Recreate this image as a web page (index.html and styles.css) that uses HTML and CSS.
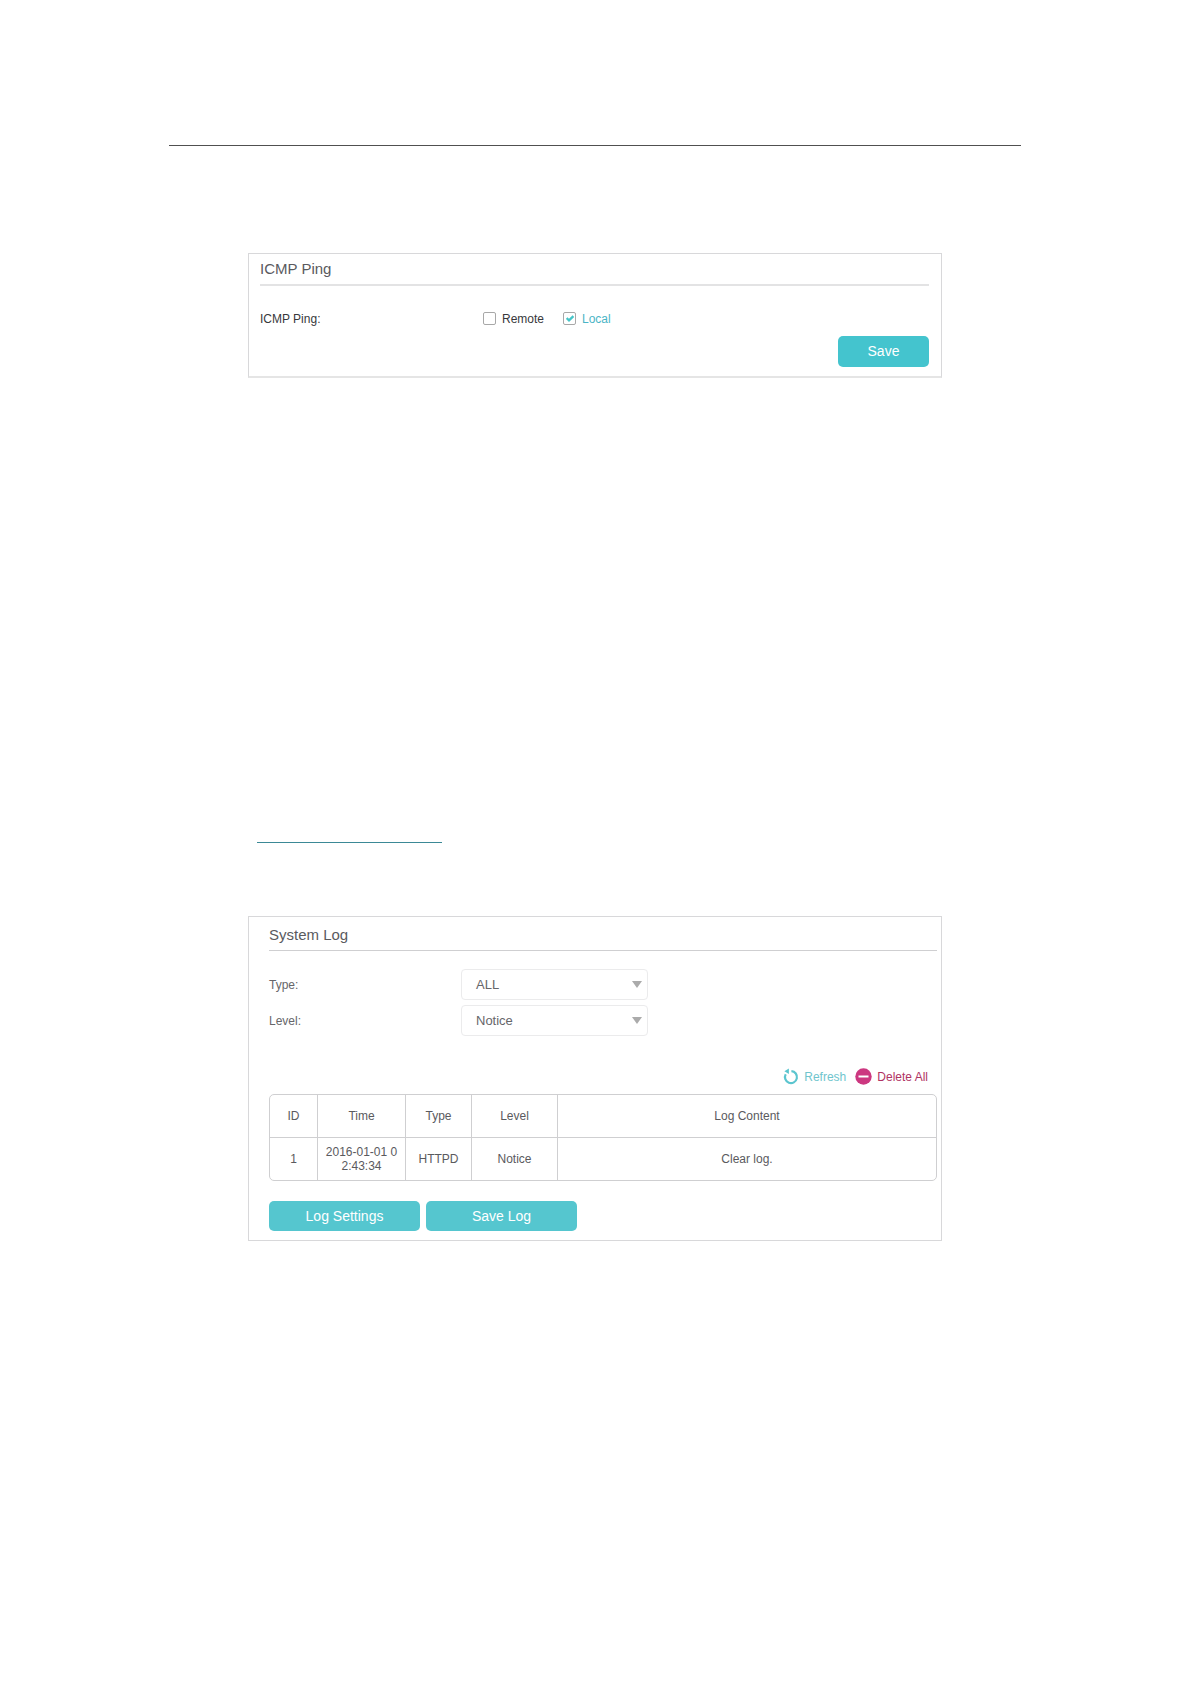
FILE: index.html
```html
<!DOCTYPE html>
<html lang="en">
<head>
<meta charset="utf-8">
<title>System Log</title>
<link rel="stylesheet" href="styles.css">
</head>
<body>
<hr class="page-rule">
<section class="panel ping">
  <h2 class="title">ICMP Ping</h2>
  <div class="ping-row">
    <span class="label">ICMP Ping:</span>
    <span class="check"><span class="box"></span>Remote</span>
    <span class="check on"><span class="box"><svg width="8" height="7" viewBox="0 0 8 7"><path d="M0.6 3L3 5.3L7.4 1.2" fill="none" stroke="#45c5c8" stroke-width="2.3"/></svg></span>Local</span>
  </div>
  <button class="btn save">Save</button>
</section>
<hr class="link-rule">
<section class="panel log">
  <h2 class="title">System Log</h2>
  <div class="field"><span class="label">Type:</span><span class="select">ALL<i class="arrow"></i></span></div>
  <div class="field"><span class="label">Level:</span><span class="select">Notice<i class="arrow"></i></span></div>
  <div class="actions">
    <span class="action refresh"><svg width="16" height="17" viewBox="0 0 16 17"><path d="M8.4 3.1A6 6 0 1 1 2.7 6.2" fill="none" stroke="#5bc5cf" stroke-width="2.2"/><path d="M1.4 3.3L5.9 0.4V6Z" fill="#5bc5cf"/></svg>Refresh</span>
    <span class="action delete"><svg width="17" height="17" viewBox="0 0 17 17"><circle cx="8.5" cy="8.5" r="8.2" fill="#cc3780"/><path d="M3.5 8.5H13.5" stroke="#fff" stroke-width="2"/></svg>Delete All</span>
  </div>
  <div class="table">
    <span>ID</span><span>Time</span><span>Type</span><span>Level</span><span>Log Content</span>
    <span>1</span><span>2016-01-01 0<br>2:43:34</span><span>HTTPD</span><span>Notice</span><span>Clear log.</span>
  </div>
  <div class="buttons"><button class="btn">Log Settings</button><button class="btn">Save Log</button></div>
</section>
</body>
</html>
```
FILE: styles.css
```css
* { box-sizing: border-box; }
body {
  margin: 0;
  height: 1684px;
  padding-top: 145px;
  background: #fff;
  color: #5a5a5e;
  font: 12px/14px "Liberation Sans", Arial, sans-serif;
}
.page-rule { width: 852px; height: 1px; margin: 0 0 0 169px; border: 0; background: #505050; }
.link-rule { width: 185px; height: 1px; margin: 464px 0 0 257px; border: 0; background: #3b8996; }
.panel { width: 694px; margin-left: 248px; border: 1px solid #d8d8da; }
.title { margin: 0; font-size: 15px; font-weight: 400; line-height: 18px; }
.btn {
  display: block;
  height: 30px;
  padding: 0;
  border: 0;
  border-radius: 5px;
  background: #55c6cf;
  color: #fff;
  font: 14px/30px "Liberation Sans", Arial, sans-serif;
}

.ping { height: 125px; margin-top: 107px; padding: 6px 12px 0 11px; border-bottom: 2px solid #e5e5e5; }
.ping .title { height: 26px; border-bottom: 2px solid #e3e3e4; }
.ping-row { display: flex; align-items: center; height: 14px; margin-top: 26px; color: #38383c; }
.ping-row .label { width: 223px; }
.check { display: flex; align-items: center; width: 80px; }
.check.on { color: #4bb5c6; }
.box {
  display: flex;
  align-items: center;
  justify-content: center;
  width: 13px;
  height: 13px;
  margin: -1px 6px 0 0;
  border: 1px solid #a8a8a8;
  border-radius: 2px;
}
.ping .save { width: 91px; height: 31px; margin: 10px 0 0 auto; background: #44c4ce; line-height: 31px; }

.log { height: 325px; margin-top: 73px; padding: 9px 4px 0 20px; }
.log .title { height: 25px; margin-bottom: 18px; border-bottom: 1px solid #cfcfd1; }
.field { display: flex; align-items: center; height: 31px; margin-bottom: 5px; color: #66666a; }
.field .label { width: 192px; }
.select {
  display: flex;
  align-items: center;
  justify-content: space-between;
  width: 187px;
  height: 31px;
  padding: 0 5px 0 14px;
  border: 1px solid #ebebec;
  border-radius: 4px;
  font-size: 13px;
}
.arrow { border: solid transparent; border-width: 7px 5.5px 0; border-top-color: #ababab; }
.actions { display: flex; justify-content: flex-end; height: 17px; margin-top: 32px; padding-right: 9px; }
.action { display: flex; align-items: center; gap: 5px; }
.refresh { margin-right: 9px; color: #6fc5cd; }
.delete { color: #b03363; }
.table {
  display: grid;
  grid-template-columns: 48px 88px 66px 86px 1fr;
  grid-template-rows: 43px 42px;
  height: 87px;
  margin-top: 9px;
  border: 1px solid #cfcfd1;
  border-radius: 5px;
  text-align: center;
}
.table span { display: flex; align-items: center; justify-content: center; border-right: 1px solid #cfcfd1; }
.table span:nth-child(5n) { border-right: 0; }
.table span:nth-child(-n+5) { border-bottom: 1px solid #cfcfd1; }
.buttons { display: flex; gap: 6px; margin-top: 20px; }
.buttons .btn { width: 151px; }
```
